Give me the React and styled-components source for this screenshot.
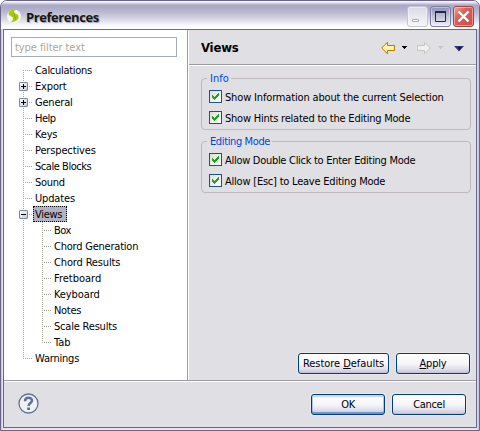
import React from "react";
import styled, { createGlobalStyle, css } from "styled-components";

const Global = createGlobalStyle`
  * { box-sizing: border-box; }
  body {
    margin: 0;
    background: #fff;
    font-family: "DejaVu Sans Condensed", "DejaVu Sans", sans-serif;
    font-stretch: condensed;
    font-size: 11px;
    line-height: 16px;
    color: #000;
    white-space: nowrap;
  }
`;

const Window = styled.div`
  width: 480px;
  height: 431px;
  display: flex;
  flex-direction: column;
  border: 1px solid #68648a;
  border-radius: 7px 7px 0 0;
  background: linear-gradient(90deg, #c8c6da 0 1px, #e6e5ef 1px 2px, #e6e5ef calc(100% - 2px), #c8c6da calc(100% - 1px));
  padding: 0 2px 2px;
  overflow: hidden;
`;

const TitleBar = styled.header`
  height: 28px;
  flex: none;
  margin: 0 -2px;
  padding: 5px 5px 0 6px;
  display: flex;
  background: linear-gradient(#fff 0, #eeedf5 1px, #c5c3d8 3px, #a9a8c5 4px, #b0afca 8px, #c1c0d5 13px, #dcdbe7 19px, #f8f8fb 24px, #fff 27px);
`;

const Title = styled.h1`
  margin: 2px 0 0 4px;
  flex: 1;
  font: bold 13px/18px "Open Sans", sans-serif;
  font-stretch: normal;
  letter-spacing: ${(p) => p.$ls}px;
  color: #161616;
  text-shadow: 1px 1px 1px #a3a1b8;
`;

const Controls = styled.div`
  display: flex;
  gap: 2px;
`;

const tones = {
  min: ["#d9d9e5", "#f7f7fa", "#c4c4d2"],
  max: ["#8f90b5", "#f0f0f8", "#7b7da3"],
  close: ["#e57a72", "#cf4d49", "#a54646"],
};

const ControlButton = styled.button`
  width: 21px;
  height: 21px;
  padding: 0;
  display: block;
  border: 1px solid ${(p) => tones[p.$tone][2]};
  border-radius: 3px;
  background: ${(p) =>
    p.$tone === "close"
      ? "linear-gradient(135deg, #f1aaa4, #dc625c 35%, #ce4c48)"
      : `linear-gradient(${tones[p.$tone][0]}, ${tones[p.$tone][1]})`};
  box-shadow: inset 0 0 0 1px #ffffff66;
  svg { display: block; }
`;

const Body = styled.div`
  flex: 1;
  min-height: 0;
  display: flex;
  flex-direction: column;
  border: 1px solid #68688c;
  background: #e0dfe3;
`;

const Columns = styled.div`
  height: 351px;
  flex: none;
  display: flex;
  border-bottom: 1px solid #9d9da1;
  box-shadow: 0 1px #fff;
`;

const Sidebar = styled.aside`
  width: 184px;
  flex: none;
  padding: 7px 0 0 7px;
  background: #fff;
  border-right: 1px solid #9d9da1;
`;

const Filter = styled.div`
  width: 166px;
  height: 20px;
  padding: 2px 3px;
  border: 1px solid #a5acb2;
  color: #aca899;
  letter-spacing: ${(p) => p.$ls}px;
`;

const Tree = styled.ul`
  list-style: none;
  margin: 5px 0 0 8px;
  padding: 0;
`;

const SubTree = styled(Tree)`
  margin: 0 0 0 19px;
`;

const dotsDown = "repeating-linear-gradient(#aca899 0 1px, transparent 1px 2px)";
const dotsAcross = "repeating-linear-gradient(90deg, #aca899 0 1px, transparent 1px 2px)";

const Node = styled.li`
  background: ${dotsDown} 4px ${(p) => (p.$first ? "8px" : "0")} / 1px ${(p) => (p.$last ? "9px" : "100%")} no-repeat;
`;

const NodeRow = styled.div`
  height: 16px;
  display: flex;
  align-items: center;
  background: ${dotsAcross} 4px 8px / 9px 1px no-repeat;
`;

const Expander = styled.span`
  width: 9px;
  height: 9px;
  margin-right: 5px;
  border: 1px solid ${(p) => (p.$shown ? "#7b87a5" : "transparent")};
  border-radius: 1px;
  svg { display: block; }
  ${(p) => p.$shown && css`background: linear-gradient(135deg, #fff, #c9c8d8);`}
`;

const NodeLabel = styled.span`
  height: 16px;
  line-height: 17px;
  padding: 0 0 0 2px;
  letter-spacing: ${(p) => p.$ls}px;
  ${(p) =>
    p.$selected &&
    css`
      width: 34px;
      background: #b1b2c4;
      outline: 1px dotted #000;
      outline-offset: -1px;
    `}
`;

const Page = styled.main`
  flex: 1;
  margin-left: 1px;
  display: flex;
  flex-direction: column;
  box-shadow: -1px 0 #fff;
`;

const PageHeader = styled.div`
  height: 35px;
  padding: 2px 11px 0 12px;
  display: flex;
  align-items: center;
  border-bottom: 1px solid #9d9da1;
  box-shadow: 0 1px #fff;
`;

const Heading = styled.h2`
  margin: 0;
  flex: 1;
  font: bold 13px/18px "DejaVu Sans Condensed", sans-serif;
  font-stretch: condensed;
  letter-spacing: ${(p) => p.$ls}px;
`;

const Nav = styled.div`
  width: 84px;
  height: 14px;
  display: flex;
  svg { display: block; }
`;

const Groups = styled.div`
  flex: 1;
  padding: 5px 5px 0 12px;
  display: flex;
  flex-direction: column;
  gap: 3px;
`;

const Group = styled.fieldset`
  height: 60px;
  margin: 0;
  padding: 0 0 0 7px;
  border: 1px solid #bfb8bf;
  border-radius: 4px;
  min-width: 0;
`;

const Legend = styled.legend`
  height: 16px;
  line-height: 18px;
  margin-left: -2px;
  padding: 0 2px 0 3px;
  color: #0046d5;
  letter-spacing: ${(p) => p.$ls}px;
`;

const Check = styled.label`
  height: 21px;
  display: flex;
  align-items: center;
  gap: 3px;
`;

const Box = styled.span`
  width: 13px;
  height: 13px;
  border: 1px solid #1c5180;
  background: linear-gradient(135deg, #dcdcd7, #fff);
  svg { display: block; }
`;

const CheckText = styled.span`
  padding-top: 2px;
  letter-spacing: ${(p) => p.$ls}px;
`;

const Actions = styled.div`
  display: flex;
  justify-content: flex-end;
  gap: 7px;
  padding: 0 6px 6px;
`;

const Button = styled.button`
  width: ${(p) => p.$w}px;
  height: 21px;
  padding: 1px 0 0;
  border: 1px solid #003c74;
  border-radius: 3px;
  background: linear-gradient(#fff, #f6f6fa 50%, #dfdeea 80%, #c3c1d6);
  box-shadow: ${(p) =>
    p.$primary
      ? "inset 0 2px #c6d9fa, inset 0 -2px #7291e0, inset 1px 0 #a9c2f2, inset -1px 0 #a9c2f2, 0 0 0 1px #ffffff55"
      : "0 0 0 1px #ffffff55"};
  font: inherit;
  line-height: 18px;
  letter-spacing: ${(p) => p.$ls}px;
  color: #000;
`;

const Mnemonic = styled.span`
  text-decoration: underline;
  text-underline-offset: 1px;
`;

const Footer = styled.footer`
  flex: 1;
  display: flex;
  justify-content: space-between;
  padding: 12px 10px 0 14px;
`;

const FooterButtons = styled.div`
  display: flex;
  gap: 7px;
  padding-top: 1px;
`;

const AppIcon = () => (
  <svg width="15" height="19" viewBox="0 0 15 19">
    <circle cx="7" cy="10.500" r="7" fill="#f7f8f0" />
    <path d="M10 3C5 3 1 5 1.500 8c.5 2.500 4.500 2 4.500 4.500 0 2-1.500 3-2.500 4 5-.5 8.500-3 8-6.500C11 7.500 7 8 7 6c0-1.500 1.500-2.500 3-3z" fill="#a9c90c" />
    <path d="M7 6.500c-.5 3.500 2.500 3.500 1 7" fill="none" stroke="#7da010" strokeWidth=".8" />
  </svg>
);

const Sign = ({ plus }) => (
  <svg width="7" height="7" shapeRendering="crispEdges">
    <path d={plus ? "M1 3h5v1H1zM3 1h1v5H3z" : "M1 3h5v1H1z"} />
  </svg>
);

const Tick = () => (
  <svg width="11" height="11" shapeRendering="crispEdges">
    <path d="M2 4h1v3H2zM3 5h1v3H3zM4 6h1v3H4zM5 5h1v3H5zM6 4h1v3H6zM7 3h1v3H7zM8 2h1v3H8z" fill="#21a121" />
  </svg>
);

const NavIcons = () => (
  <svg width="84" height="14" viewBox="0 0 84 14">
    <path d="M.7 7 6.500 1.200V4.500h7v5h-7v3.300z" fill="#fff3a6" stroke="#b77b00" />
    <path d="M21 5h5v1h-1v1h-1v1h-1V7h-1V6h-1z" fill="#000" />
    <path d="M49.300 7 43.500 1.200V4.500h-7v5h7v3.300z" fill="#efeff0" stroke="#c5c5c1" />
    <path d="M57 5h5v1h-1v1h-1v1h-1V7h-1V6h-1z" fill="#c6c6c6" />
    <path d="M73 5h10L78 10.500z" fill="#34347c" />
    <path d="M77 6h4l-3 3.500z" fill="#17172e" />
  </svg>
);

const HelpIcon = () => (
  <svg width="21" height="21" viewBox="0 0 21 21">
    <circle cx="10.500" cy="10.500" r="9.500" fill="#f1f1f4" stroke="#5f7597" strokeWidth="1.300" />
    <path d="M7 8.200C7 3.700 14 3.900 14 7.600c0 2.500-3.400 2.500-3.400 5.400" fill="none" stroke="#5b7195" strokeWidth="2.500" />
    <rect x="9.200" y="14.500" width="2.800" height="2.500" fill="#5b7195" />
  </svg>
);

const nodes = [
  { text: "Calculations", ls: -0.3 },
  { text: "Export", sign: "plus", ls: -0.15 },
  { text: "General", sign: "plus", ls: -0.2 },
  { text: "Help", ls: -0.5 },
  { text: "Keys", ls: -0.2 },
  { text: "Perspectives", ls: -0.15 },
  { text: "Scale Blocks", ls: -0.45 },
  { text: "Sound", ls: -0.3 },
  { text: "Updates", ls: -0.15 },
  {
    text: "Views",
    sign: "minus",
    selected: true,
    ls: -0.3,
    children: [
      { text: "Box", ls: -0.5 },
      { text: "Chord Generation", ls: -0.22 },
      { text: "Chord Results", ls: -0.15 },
      { text: "Fretboard" },
      { text: "Keyboard", ls: -0.1 },
      { text: "Notes", ls: -0.3 },
      { text: "Scale Results", ls: -0.2 },
      { text: "Tab" },
    ],
  },
  { text: "Warnings", ls: -0.2 },
];

const groups = [
  {
    name: "Info",
    ls: 0,
    options: [
      { text: "Show Information about the current Selection", ls: -0.16 },
      { text: "Show Hints related to the Editing Mode", ls: -0.22 },
    ],
  },
  {
    name: "Editing Mode",
    ls: -0.38,
    options: [
      { text: "Allow Double Click to Enter Editing Mode", ls: -0.29 },
      { text: "Allow [Esc] to Leave Editing Mode", ls: -0.22 },
    ],
  },
];

const renderNodes = (list, nested) =>
  list.map((n, i) => (
    <Node key={n.text} $first={i === 0 && !nested} $last={i === list.length - 1}>
      <NodeRow>
        <Expander $shown={!!n.sign}>{n.sign && <Sign plus={n.sign === "plus"} />}</Expander>
        <NodeLabel $selected={n.selected} $ls={n.ls || 0}>{n.text}</NodeLabel>
      </NodeRow>
      {n.children && <SubTree>{renderNodes(n.children, true)}</SubTree>}
    </Node>
  ));

export default function App() {
  return (
    <>
      <Global />
      <Window>
        <TitleBar>
          <AppIcon />
          <Title $ls={-0.42}>Preferences</Title>
          <Controls>
            <ControlButton $tone="min" aria-label="Minimize">
              <svg width="19" height="19"><path d="M4.500 12.500h6v2h-6z" fill="#fff" stroke="#aaaabd" /></svg>
            </ControlButton>
            <ControlButton $tone="max" aria-label="Maximize">
              <svg width="19" height="19"><path d="M4.500 5.500h10v9h-10z" fill="none" stroke="#20264f" /><path d="M4 5h11" stroke="#20264f" strokeWidth="2" /></svg>
            </ControlButton>
            <ControlButton $tone="close" aria-label="Close">
              <svg width="19" height="19"><path d="M4.500 4.500l10 10M14.500 4.500l-10 10" stroke="#fff" strokeWidth="2.400" /></svg>
            </ControlButton>
          </Controls>
        </TitleBar>
        <Body>
          <Columns>
            <Sidebar>
              <Filter $ls={-0.07}>type filter text</Filter>
              <Tree>{renderNodes(nodes)}</Tree>
            </Sidebar>
            <Page>
              <PageHeader>
                <Heading $ls={-0.2}>Views</Heading>
                <Nav><NavIcons /></Nav>
              </PageHeader>
              <Groups>
                {groups.map((g) => (
                  <Group key={g.name}>
                    <Legend $ls={g.ls}>{g.name}</Legend>
                    {g.options.map((o) => (
                      <Check key={o.text}>
                        <Box><Tick /></Box>
                        <CheckText $ls={o.ls || 0}>{o.text}</CheckText>
                      </Check>
                    ))}
                  </Group>
                ))}
              </Groups>
              <Actions>
                <Button $w={91} $ls={-0.05}>Restore <Mnemonic>D</Mnemonic>efaults</Button>
                <Button $w={74} $ls={-0.2}><Mnemonic>A</Mnemonic>pply</Button>
              </Actions>
            </Page>
          </Columns>
          <Footer>
            <HelpIcon />
            <FooterButtons>
              <Button $w={74} $ls={-0.3} $primary>OK</Button>
              <Button $w={74} $ls={-0.3}>Cancel</Button>
            </FooterButtons>
          </Footer>
        </Body>
      </Window>
    </>
  );
}
